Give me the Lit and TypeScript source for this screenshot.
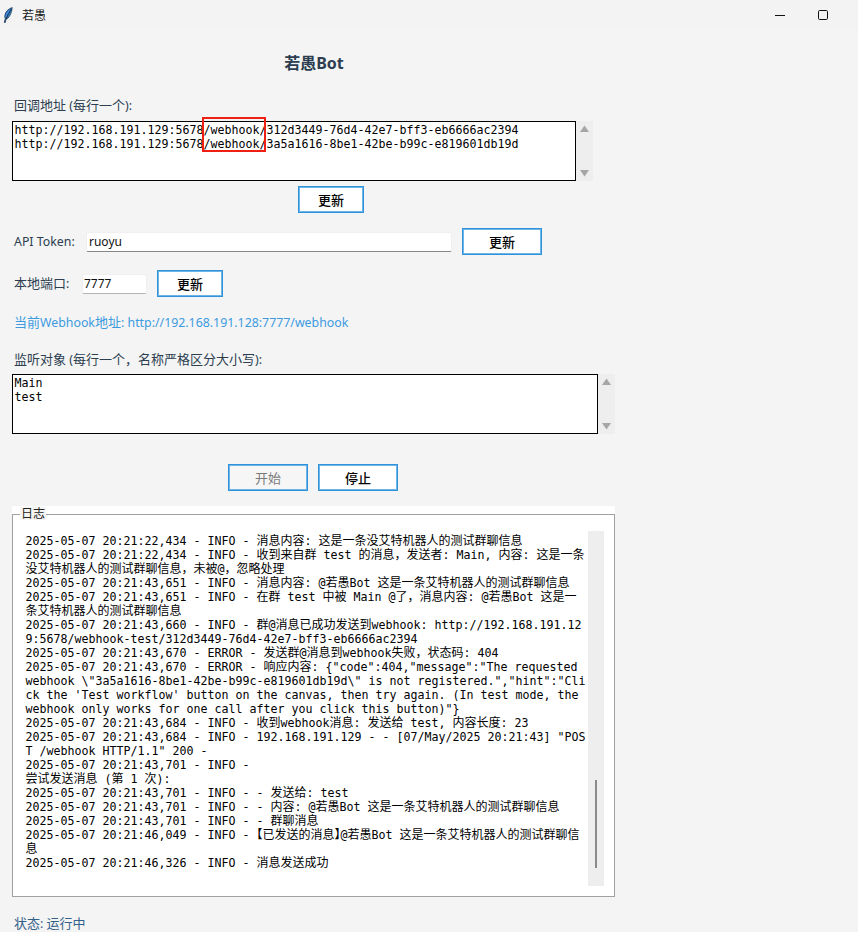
import { LitElement, html, css } from "lit";
import { customElement } from "lit/decorators.js";

const LOG = [
  "2025-05-07 20:21:22,434 - INFO - 消息内容: 这是一条没艾特机器人的测试群聊信息",
  "2025-05-07 20:21:22,434 - INFO - 收到来自群 test 的消息，发送者: Main, 内容: 这是一条",
  "没艾特机器人的测试群聊信息，未被@，忽略处理",
  "2025-05-07 20:21:43,651 - INFO - 消息内容: @若愚Bot 这是一条艾特机器人的测试群聊信息",
  "2025-05-07 20:21:43,651 - INFO - 在群 test 中被 Main @了，消息内容: @若愚Bot 这是一",
  "条艾特机器人的测试群聊信息",
  "2025-05-07 20:21:43,660 - INFO - 群@消息已成功发送到webhook: http://192.168.191.12",
  "9:5678/webhook-test/312d3449-76d4-42e7-bff3-eb6666ac2394",
  "2025-05-07 20:21:43,670 - ERROR - 发送群@消息到webhook失败，状态码: 404",
  '2025-05-07 20:21:43,670 - ERROR - 响应内容: {"code":404,"message":"The requested',
  'webhook \\"3a5a1616-8be1-42be-b99c-e819601db19d\\" is not registered.","hint":"Cli',
  "ck the 'Test workflow' button on the canvas, then try again. (In test mode, the",
  'webhook only works for one call after you click this button)"}',
  "2025-05-07 20:21:43,684 - INFO - 收到webhook消息: 发送给 test, 内容长度: 23",
  '2025-05-07 20:21:43,684 - INFO - 192.168.191.129 - - [07/May/2025 20:21:43] "POS',
  'T /webhook HTTP/1.1" 200 -',
  "2025-05-07 20:21:43,701 - INFO - ",
  "尝试发送消息 (第 1 次):",
  "2025-05-07 20:21:43,701 - INFO - - 发送给: test",
  "2025-05-07 20:21:43,701 - INFO - - 内容: @若愚Bot 这是一条艾特机器人的测试群聊信息",
  "2025-05-07 20:21:43,701 - INFO - - 群聊消息",
  "2025-05-07 20:21:46,049 - INFO - 【已发送的消息】@若愚Bot 这是一条艾特机器人的测试群聊信",
  "息",
  "2025-05-07 20:21:46,326 - INFO - 消息发送成功",
];

const runs = (line: string) =>
  line.split(/(【|】|[\u3000-\u300f\u3012-\u9fff\uff00-\uffef]+)/).map((part, i) => {
    if (!(i % 2)) return part;
    if (part === "【") return html`<span class="cjk lb">${part}</span>`;
    if (part === "】") return html`<span class="cjk rb">${part}</span>`;
    return html`<span class="cjk">${part}</span>`;
  });

@customElement("app-root")
export class AppRoot extends LitElement {
  static styles = css`
    :host {
      display: block;
      position: relative;
      height: 932px;
      overflow: hidden;
      background: #f4f4f4;
      font-family: "Noto Sans", "Noto Sans CJK SC", sans-serif;
      font-size: 12.35px;
      color: #2c3e50;
    }
    .titlebar {
      height: 30px;
      background: #f3f3f3;
      display: flex;
      align-items: center;
      color: #1a1a1a;
      font-size: 12px;
    }
    .feather { margin: 0 9px 0 3px; flex: none; }
    .app-name { flex: 1; }
    .win { width: 10px; height: 10px; flex: none; }
    .win.min { margin-right: 33px; }
    .win.max { margin-right: 30px; }
    .main { display: flex; flex-direction: column; align-items: flex-start; padding-left: 12px; }
    .title {
      width: 604px;
      text-align: center;
      margin-top: 23px;
      font-size: 16px;
      font-weight: 700;
      line-height: 20px;
    }
    .label { line-height: 16px; height: 16px; padding-left: 2px; white-space: pre; box-sizing: border-box; flex: none; }
    .label.api { width: 62px; }
    .label.port-l { width: 58px; }
    .label .cjk, .link .cjk, .status .cjk { font-size: 13px; line-height: 0; }
    .mono {
      font-family: "DejaVu Sans Mono", "Noto Sans CJK SC", monospace;
      font-size: 11.63px;
      line-height: 14px;
      color: #000;
      white-space: pre;
    }
    .cjk { font-size: 12px; line-height: 0; font-family: "Noto Sans CJK SC", sans-serif; }
    .lb { margin-left: -6px; }
    .rb { letter-spacing: -6px; }
    .line { height: 14px; }
    .area-row { display: flex; height: 60px; }
    .area {
      box-sizing: border-box;
      height: 60px;
      background: #fff;
      border: 1px solid #000;
      padding: 1px 1.5px;
    }
    .sb {
      width: 17px;
      background: #eeeeee;
      display: flex;
      flex-direction: column;
      justify-content: space-between;
      align-items: center;
      padding: 4px 0;
      box-sizing: border-box;
    }
    .sb svg { display: block; }
    button {
      box-sizing: border-box;
      height: 27px;
      flex: none;
      background: #fff;
      border: 1px solid #2f93dc;
      border-radius: 0;
      padding: 0;
      font-family: "Noto Sans CJK SC", sans-serif;
      font-size: 13px;
      font-weight: 500;
      color: #000;
      box-shadow: inset 0 0 0 1px #6fb4e6;
    }
    button.w66 { width: 66px; }
    button.w80 { width: 80px; }
    button.off { color: #7a7a7a; font-weight: 400; background: #f6f6f6; }
    .row { display: flex; align-items: center; }
    .input {
      box-sizing: border-box;
      height: 20px;
      flex: none;
      background: #fff;
      border: 1px solid #efefef;
      border-bottom: 1px solid #868686;
      border-radius: 2px;
      color: #111;
      font-size: 12px;
      line-height: 18px;
    }
    .token { width: 366px; margin-left: 12px; padding-left: 2px; }
    .port { width: 65px; margin-left: 12px; padding-left: 1px; border-bottom-color: #b4b4b4; }
    .link { color: #3c9be0; line-height: 16px; height: 16px; padding-left: 2px; }
    .actions { display: flex; gap: 10px; margin-left: 216px; }
    .logwrap {
      position: relative;
      box-sizing: border-box;
      width: 603px;
      height: 391px;
      margin-top: 15px;
      padding-top: 8px;
      background: #fff;
    }
    .logbox {
      box-sizing: border-box;
      height: 383px;
      border: 1px solid #a0a0a0;
      display: flex;
      padding: 16px 10px 10px 12.5px;
    }
    .legend {
      position: absolute;
      left: 8px;
      top: 1px;
      padding: 0 1px;
      line-height: 13px;
      background: #f6f4f2;
      color: #222;
      font-size: 12px;
    }
    .logtext { flex: 1; padding-top: 1px; }
    .logsb {
      width: 16px;
      background: #eeeeee;
      display: flex;
      justify-content: center;
      padding-top: 249px;
      box-sizing: border-box;
    }
    .thumb { width: 2px; height: 88px; background: #8a8a8a; }
    .status { line-height: 16px; height: 16px; padding-left: 2px; margin-top: 19px; color: #34618a; }
    .annot {
      position: absolute;
      left: 202px;
      top: 117px;
      width: 64px;
      height: 35px;
      box-sizing: border-box;
      border: 2px solid #f01f14;
    }
  `;

  private arrows() {
    return html`<div class="sb">
      <svg width="9" height="7" viewBox="0 0 9 7"><path d="M4.5 0.5 9 7H0z" fill="#a6a6a6" /></svg>
      <svg width="9" height="7" viewBox="0 0 9 7"><path d="M0 0h9L4.5 6.5z" fill="#a6a6a6" /></svg>
    </div>`;
  }

  render() {
    return html`
      <div class="titlebar">
        <svg class="feather" width="10" height="16" viewBox="0 0 10 16">
          <path d="M9.2 .6C6.2 1.4 2.6 4.2 1.9 8.2c-.2 1.4-.1 2.6.4 3.5L1.3 15.4l.9.2.9-3.5C6 11.6 8.6 6.2 9.2 .6z" fill="#3d87d6" stroke="#16324f" stroke-width=".8" stroke-linejoin="round" />
          <path d="M8.4 2C6.4 5 4.4 8.4 3.1 12.1" fill="none" stroke="#0f2438" stroke-width=".9" />
        </svg>
        <span class="app-name">若愚</span>
        <svg class="win min" viewBox="0 0 10 10"><path d="M0 5.5h10" stroke="#111" stroke-width="1" /></svg>
        <svg class="win max" viewBox="0 0 10 10">
          <rect x=".5" y=".5" width="9" height="9" rx="1.2" fill="none" stroke="#111" stroke-width="1" />
        </svg>
      </div>
      <div class="main">
        <div class="title">若愚Bot</div>
        <div class="label" style="margin-top:25px">${runs("回调地址 (每行一个):")}</div>
        <div class="area-row" style="margin-top:7px">
          <div class="area mono" style="width:564px">http://192.168.191.129:5678/webhook/312d3449-76d4-42e7-bff3-eb6666ac2394
http://192.168.191.129:5678/webhook/3a5a1616-8be1-42be-b99c-e819601db19d</div>
          ${this.arrows()}
        </div>
        <button class="w66" style="margin:5px 0 0 286px">更新</button>
        <div class="row" style="margin-top:15px">
          <span class="label api">API Token:</span>
          <div class="input token">ruoyu</div>
          <button class="w80" style="margin-left:10px">更新</button>
        </div>
        <div class="row" style="margin-top:15px">
          <span class="label port-l">${runs("本地端口:")}</span>
          <div class="input port">7777</div>
          <button class="w66" style="margin-left:10px">更新</button>
        </div>
        <div class="link" style="margin-top:18px">${runs("当前Webhook地址: http://192.168.191.128:7777/webhook")}</div>
        <div class="label" style="margin-top:21px">${runs("监听对象 (每行一个，名称严格区分大小写):")}</div>
        <div class="area-row" style="margin-top:6px">
          <div class="area mono" style="width:586px">Main
test</div>
          ${this.arrows()}
        </div>
        <div class="actions" style="margin-top:30px">
          <button class="w80 off">开始</button>
          <button class="w80">停止</button>
        </div>
        <div class="logwrap">
          <div class="legend">日志</div>
          <div class="logbox">
            <div class="logtext mono" style="padding-top:3px">${LOG.map((l) => html`<div class="line">${runs(l)}</div>`)}</div>
            <div class="logsb"><div class="thumb"></div></div>
          </div>
        </div>
        <div class="status">${runs("状态: 运行中")}</div>
      </div>
      <div class="annot"></div>
    `;
  }
}
